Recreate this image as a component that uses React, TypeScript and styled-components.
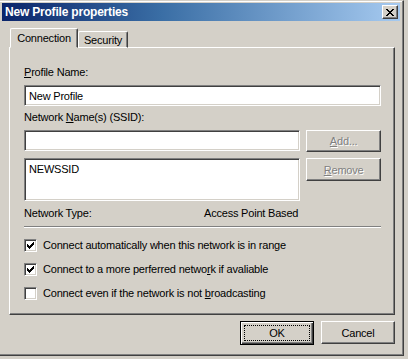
import React from 'react';
import styled, { createGlobalStyle } from 'styled-components';

const GlobalStyle = createGlobalStyle`
  html, body {
    margin: 0;
    padding: 0;
    background: #d4d0c8;
  }
  body {
    font-family: "Liberation Sans", Arial, sans-serif;
    font-size: 11px;
    letter-spacing: -0.2px;
    color: #000;
  }
`;

const Window = styled.div`
  width: 404px;
  height: 356px;
  box-sizing: border-box;
  background: #d4d0c8;
  border-top: 1px solid #d4d0c8;
  border-right: 1px solid #404040;
  border-bottom: 1px solid #404040;
  box-shadow: inset -1px -1px 0 #808080, inset 0 1px 0 #fff;
  padding: 2px 3px 0 2px;
  display: flex;
  flex-direction: column;
`;

const TitleBar = styled.div`
  height: 18px;
  display: flex;
  align-items: center;
  justify-content: space-between;
  padding: 0 2px 0 3px;
  background: linear-gradient(90deg, #0a246a 0%, #3a6ea5 40%, #a6caf0 100%);
  color: #fff;
  font-weight: bold;
  font-size: 12px;
  letter-spacing: -0.2px;
`;

const CloseButton = styled.div`
  width: 16px;
  height: 14px;
  box-sizing: border-box;
  background: #d4d0c8;
  border-top: 1px solid #fff;
  border-left: 1px solid #fff;
  border-right: 1px solid #404040;
  border-bottom: 1px solid #404040;
  box-shadow: inset -1px -1px 0 #808080;
  display: flex;
  align-items: center;
  justify-content: center;
`;

const Body = styled.div`
  flex: 1;
  padding: 7px 5px 0 7px;
  display: flex;
  flex-direction: column;
`;

const TabStrip = styled.div`
  display: flex;
  align-items: flex-end;
  height: 20px;
  margin-bottom: -1px;
  position: relative;
  z-index: 1;
`;

const Tab = styled.div<{ $w: number; $active?: boolean }>`
  box-sizing: border-box;
  width: ${(p) => p.$w}px;
  height: ${(p) => (p.$active ? '20px' : '17px')};
  margin-left: ${(p) => (p.$active ? '1px' : '0')};
  display: flex;
  align-items: center;
  justify-content: center;
  background: #d4d0c8;
  border-top: 1px solid #fff;
  border-left: 1px solid #fff;
  border-right: 1px solid #404040;
  box-shadow: inset -1px 0 0 #808080;
  border-radius: 2px 2px 0 0;
  ${(p) => (p.$active ? 'border-bottom: 1px solid #d4d0c8;' : 'border-bottom: 1px solid #fff;')}
`;

const Panel = styled.div`
  width: 386px;
  height: 268px;
  box-sizing: border-box;
  border-top: 1px solid #fff;
  border-left: 1px solid #fff;
  border-right: 1px solid #404040;
  border-bottom: 1px solid #404040;
  box-shadow: inset -1px -1px 0 #808080;
  padding: 17px 13px 0 14px;
  display: flex;
  flex-direction: column;
`;

const Label = styled.div`
  height: 14px;
  line-height: 14px;
  margin-bottom: 6px;
`;

const Sunken = styled.div<{ $h: number; $w?: number }>`
  box-sizing: border-box;
  width: ${(p) => (p.$w ? `${p.$w}px` : '100%')};
  height: ${(p) => p.$h}px;
  background: #fff;
  border-top: 1px solid #808080;
  border-left: 1px solid #808080;
  border-right: 1px solid #fff;
  border-bottom: 1px solid #fff;
  box-shadow: inset 1px 1px 0 #404040, inset -1px -1px 0 #d4d0c8;
  padding: 3px 4px;
  line-height: 14px;
`;

const Field = styled.div`
  margin-bottom: 4px;
`;

const Rows = styled.div`
  display: flex;
  flex-direction: column;
  gap: 6px;
`;

const Row = styled.div`
  display: flex;
  gap: 6px;
  align-items: flex-start;
`;

const Button = styled.div<{ $w: number; $h: number; $disabled?: boolean; $default?: boolean }>`
  box-sizing: border-box;
  width: ${(p) => p.$w}px;
  height: ${(p) => p.$h}px;
  background: #d4d0c8;
  display: flex;
  align-items: center;
  justify-content: center;
  color: ${(p) => (p.$disabled ? '#808080' : '#000')};
  text-shadow: ${(p) => (p.$disabled ? '1px 1px 0 #fff' : 'none')};
  border: 1px solid;
  border-top-color: ${(p) => (p.$default ? '#000' : '#fff')};
  border-left-color: ${(p) => (p.$default ? '#000' : '#fff')};
  border-right-color: ${(p) => (p.$default ? '#000' : '#404040')};
  border-bottom-color: ${(p) => (p.$default ? '#000' : '#404040')};
  box-shadow: ${(p) =>
    p.$default
      ? 'inset 1px 1px 0 #fff, inset -1px -1px 0 #404040, inset -2px -2px 0 #808080'
      : 'inset -1px -1px 0 #808080'};
`;

const Focus = styled.span`
  display: flex;
  align-items: center;
  justify-content: center;
  width: calc(100% - 8px);
  height: calc(100% - 8px);
  outline: 1px dotted #000;
`;

const TypeRow = styled.div`
  display: flex;
  height: 14px;
  line-height: 14px;
  margin-top: 5px;
`;

const TypeLabel = styled.div`
  width: 180px;
`;

const Separator = styled.div`
  height: 0;
  border-top: 1px solid #808080;
  border-bottom: 1px solid #fff;
  margin: 6px 0 10px 0;
`;

const CheckRow = styled.div`
  display: flex;
  align-items: center;
  gap: 6px;
  height: 14px;
  margin-bottom: 10px;
`;

const Box = styled.div`
  width: 13px;
  height: 13px;
  box-sizing: border-box;
  background: #fff;
  border-top: 1px solid #808080;
  border-left: 1px solid #808080;
  border-right: 1px solid #fff;
  border-bottom: 1px solid #fff;
  box-shadow: inset 1px 1px 0 #404040, inset -1px -1px 0 #d4d0c8;
  display: flex;
  align-items: center;
  justify-content: center;
`;

const Footer = styled.div`
  display: flex;
  justify-content: flex-end;
  gap: 7px;
  padding: 6px 0 0 0;
`;

const U = styled.span`
  text-decoration: underline;
`;

const Check = () => (
  <svg width="7" height="7" viewBox="0 0 7 7">
    <path d="M0 2h1v1h1v1h1V3h1V2h1V1h1V0h1v3H6v1H5v1H4v1H3v1H2V6H1V5H0z" fill="#000" />
  </svg>
);

const Checkbox = ({ checked, children }: { checked?: boolean; children: React.ReactNode }) => (
  <CheckRow>
    <Box>{checked && <Check />}</Box>
    <span>{children}</span>
  </CheckRow>
);

export default function App() {
  return (
    <>
      <GlobalStyle />
      <Window>
        <TitleBar>
          <span>New Profile properties</span>
          <CloseButton>
            <svg width="8" height="7" viewBox="0 0 8 7">
              <path d="M0 0h2v1h1v1h2V1h1V0h2v1H7v1H6v1H5v1h1v1h1v1h1v1H6V6H5V5H3v1H2v1H0V6h1V5h1V4h1V3H2V2H1V1H0z" fill="#000" />
            </svg>
          </CloseButton>
        </TitleBar>
        <Body>
          <TabStrip>
            <Tab $w={68} $active>Connection</Tab>
            <Tab $w={50}>Security</Tab>
          </TabStrip>
          <Panel>
            <Field>
              <Label>
                <U>P</U>rofile Name:
              </Label>
              <Sunken $h={21}>New Profile</Sunken>
            </Field>
            <Label>
              Network <U>N</U>ame(s) (SSID):
            </Label>
            <Rows>
              <Row>
                <Sunken $h={21} $w={277} />
                <Button $w={75} $h={22} $disabled>
                  <span>
                    <U>A</U>dd...
                  </span>
                </Button>
              </Row>
              <Row>
                <Sunken $h={43} $w={277}>NEWSSID</Sunken>
                <Button $w={75} $h={23} $disabled>
                  <span>
                    <U>R</U>emove
                  </span>
                </Button>
              </Row>
            </Rows>
            <TypeRow>
              <TypeLabel>Network Type:</TypeLabel>
              <span>Access Point Based</span>
            </TypeRow>
            <Separator />
            <Checkbox checked>Connect automatically when this network is in range</Checkbox>
            <Checkbox checked>
              Connect to a more perferred netwo<U>r</U>k if avaliable
            </Checkbox>
            <Checkbox>
              Connect even if the network is not <U>b</U>roadcasting
            </Checkbox>
          </Panel>
          <Footer>
            <Button $w={74} $h={24} $default>
              <Focus>OK</Focus>
            </Button>
            <Button $w={74} $h={23}>
              Cancel
            </Button>
          </Footer>
        </Body>
      </Window>
    </>
  );
}
